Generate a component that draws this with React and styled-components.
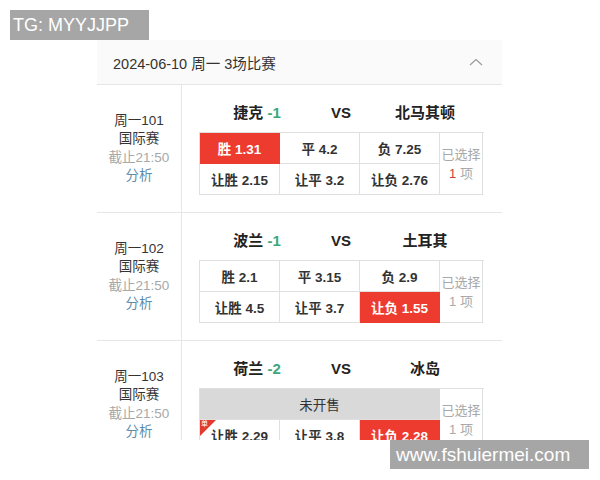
import React from "react";
import styled, { createGlobalStyle } from "styled-components";

const matches = [
  {
    no: "周一101",
    home: "捷克",
    handicap: "-1",
    away: "北马其顿",
    odds: [
      { label: "胜", value: "1.31", picked: true },
      { label: "平", value: "4.2" },
      { label: "负", value: "7.25" },
    ],
    rang: [
      { label: "让胜", value: "2.15" },
      { label: "让平", value: "3.2" },
      { label: "让负", value: "2.76" },
    ],
    countRed: true,
  },
  {
    no: "周一102",
    home: "波兰",
    handicap: "-1",
    away: "土耳其",
    odds: [
      { label: "胜", value: "2.1" },
      { label: "平", value: "3.15" },
      { label: "负", value: "2.9" },
    ],
    rang: [
      { label: "让胜", value: "4.5" },
      { label: "让平", value: "3.7" },
      { label: "让负", value: "1.55", picked: true },
    ],
  },
  {
    no: "周一103",
    home: "荷兰",
    handicap: "-2",
    away: "冰岛",
    closed: true,
    rang: [
      { label: "让胜", value: "2.29", single: true },
      { label: "让平", value: "3.8" },
      { label: "让负", value: "2.28", picked: true },
    ],
  },
];

const App = () => {
  return (
    <>
      <GlobalStyle />
      <Page>
        <Panel>
          <DayHeader>
            <span>2024-06-10 周一 3场比赛</span>
            <svg width="14" height="8" viewBox="0 0 14 8">
              <polyline
                points="1,7 7,1.5 13,7"
                fill="none"
                stroke="#999"
                strokeWidth="1.2"
              />
            </svg>
          </DayHeader>
          {matches.map((m) => (
            <MatchRow key={m.no}>
              <InfoCol>
                <InfoLine>{m.no}</InfoLine>
                <InfoLine>国际赛</InfoLine>
                <InfoLine $muted>截止21:50</InfoLine>
                <InfoLine $link>分析</InfoLine>
              </InfoCol>
              <BetCol>
                <Teams>
                  <Team>
                    {m.home} <Handicap>{m.handicap}</Handicap>
                  </Team>
                  <Team>VS</Team>
                  <Team>{m.away}</Team>
                </Teams>
                <OddsGrid>
                  {m.closed ? (
                    <ClosedCell>未开售</ClosedCell>
                  ) : (
                    m.odds.map((o) => (
                      <OddCell key={o.label} $picked={o.picked}>
                        {o.label} {o.value}
                      </OddCell>
                    ))
                  )}
                  <PickedCount>
                    <span>已选择</span>
                    <span>
                      <CountNum $red={m.countRed}>1</CountNum> 项
                    </span>
                  </PickedCount>
                  {m.rang.map((o) => (
                    <OddCell key={o.label} $picked={o.picked}>
                      {o.single && (
                        <SingleBadge>
                          <span>单</span>
                        </SingleBadge>
                      )}
                      {o.label} {o.value}
                    </OddCell>
                  ))}
                </OddsGrid>
              </BetCol>
            </MatchRow>
          ))}
        </Panel>
        <Watermark $top>TG: MYYJJPP</Watermark>
        <Watermark>www.fshuiermei.com</Watermark>
      </Page>
    </>
  );
};

export default App;

const GlobalStyle = createGlobalStyle`
  body {
    margin: 0;
    background: #fff;
    font-family: "Liberation Sans", "Noto Sans CJK SC", sans-serif;
  }
`;

const Page = styled.div`
  position: relative;
  width: 600px;
  height: 480px;
  padding-top: 40px;
  box-sizing: border-box;
  overflow: hidden;
`;

const Panel = styled.div`
  width: 405px;
  height: 400px;
  margin-left: 97px;
  overflow: hidden;
  background: #fff;
`;

const DayHeader = styled.div`
  height: 44px;
  display: flex;
  align-items: center;
  justify-content: space-between;
  padding: 0 19px 0 16px;
  background: #fafafa;
  border-bottom: 1px solid #e6e6e6;
  font-size: 14.5px;
  color: #333;
`;

const MatchRow = styled.div`
  display: grid;
  grid-template-columns: 85px 1fr;
  border-bottom: 1px solid #e6e6e6;
`;

const InfoCol = styled.div`
  display: flex;
  flex-direction: column;
  align-items: center;
  justify-content: center;
  border-right: 1px solid #e6e6e6;
`;

const InfoLine = styled.div`
  font-size: 13.5px;
  line-height: 18.5px;
  color: ${(p) => (p.$link ? "#5f8ca8" : p.$muted ? "#a8a8a8" : "#333")};
`;

const BetCol = styled.div`
  padding: 18px 18px 17px 17px;
`;

const Teams = styled.div`
  display: grid;
  grid-template-columns: repeat(3, 84px);
  margin: 0 16px 9px;
  height: 20px;
  align-items: center;
`;

const Team = styled.div`
  text-align: center;
  font-size: 15px;
  line-height: 20px;
  font-weight: bold;
  color: #222;
  white-space: nowrap;
`;

const Handicap = styled.span`
  color: #3aa77c;
`;

const OddsGrid = styled.div`
  display: grid;
  grid-template-columns: 80px 80px 80px 43px;
  grid-auto-rows: 31px;
  width: 284px;
  border-top: 1px solid #e0e0e0;
  border-left: 1px solid #e0e0e0;
`;

const OddCell = styled.div`
  position: relative;
  display: flex;
  align-items: center;
  justify-content: center;
  border-right: 1px solid #e0e0e0;
  border-bottom: 1px solid #e0e0e0;
  font-size: 13.5px;
  font-weight: bold;
  color: ${(p) => (p.$picked ? "#fff" : "#333")};
  background: ${(p) => (p.$picked ? "#ee3b2f" : "#fff")};
  border-color: ${(p) => (p.$picked ? "#ee3b2f" : "#e0e0e0")};
  white-space: nowrap;
`;

const ClosedCell = styled.div`
  grid-column: span 3;
  display: flex;
  align-items: center;
  justify-content: center;
  background: #d9d9d9;
  border-right: 1px solid #d9d9d9;
  border-bottom: 1px solid #e0e0e0;
  font-size: 13.5px;
  color: #333;
`;

const PickedCount = styled.div`
  grid-row: span 2;
  grid-column: 4;
  display: flex;
  flex-direction: column;
  align-items: center;
  justify-content: center;
  border-right: 1px solid #e0e0e0;
  border-bottom: 1px solid #e0e0e0;
  font-size: 13px;
  line-height: 19px;
  color: #a8a8a8;
  white-space: nowrap;
`;

const CountNum = styled.span`
  color: ${(p) => (p.$red ? "#c0453a" : "#a8a8a8")};
`;

const SingleBadge = styled.div`
  position: absolute;
  top: 0;
  left: 0;
  width: 0;
  height: 0;
  border-top: 16px solid #e23a2e;
  border-right: 16px solid transparent;

  span {
    position: absolute;
    top: -16px;
    left: 1px;
    font-size: 7px;
    line-height: 8px;
    font-weight: normal;
    color: #fff;
  }
`;

const Watermark = styled.div`
  position: absolute;
  background: #a6a6a6;
  color: #fff;
  font-family: "Liberation Sans", sans-serif;
  white-space: nowrap;
  ${(p) =>
    p.$top
      ? `top: 10px; left: 10px; width: 139px; height: 30px; line-height: 30px;
         padding-left: 3px; font-size: 18px;`
      : `top: 440px; left: 390px; width: 199px; height: 29px; line-height: 29px;
         padding-left: 6px; font-size: 19px;`}
  box-sizing: border-box;
`;
